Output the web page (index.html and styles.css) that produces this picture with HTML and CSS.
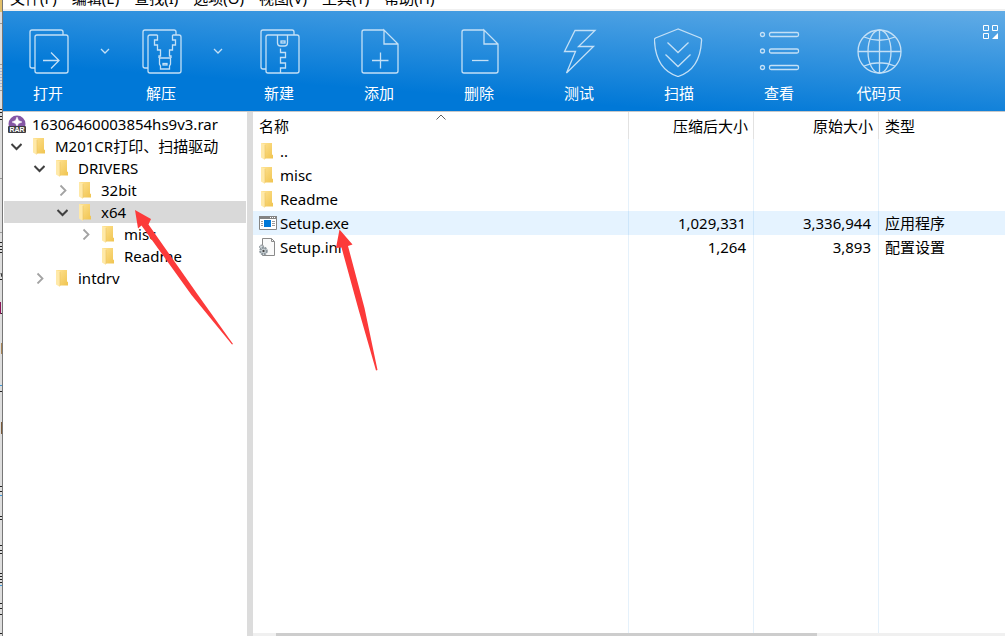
FILE: index.html
```html
<!DOCTYPE html>
<html lang="zh-CN">
<head>
<meta charset="utf-8">
<title>16306460003854hs9v3.rar</title>
<link rel="stylesheet" href="styles.css">
</head>
<body>
<svg width="0" height="0" class="defs" aria-hidden="true">
  <defs>
    <linearGradient id="gold" x1="0" y1="0" x2="1" y2="1"><stop offset="0" stop-color="#ffe394"/><stop offset="1" stop-color="#f0c450"/></linearGradient>
    <symbol id="folder" viewBox="0 0 14 18"><path d="M1 1h11v11.500l1 .5v3.500H4z" fill="url(#gold)"/><path d="M1 1l4 1.500v15.500l-4-2.500z" fill="#ffe9a8"/><path d="M5 3v14" stroke="#e9c261" stroke-width=".6"/></symbol>
    <symbol id="down" viewBox="0 0 12 12"><path d="M1.500 4L6.500 9l5-5" fill="none" stroke="#404040" stroke-width="2"/></symbol>
    <symbol id="right" viewBox="0 0 12 12"><path d="M4.500 1.500L9.500 6.500 4.500 11.500" fill="none" stroke="#a3a3a3" stroke-width="1.800"/></symbol>
  </defs>
</svg>
<div class="screen">
  <svg class="backdrop" aria-hidden="true">
    <rect width="3" height="12" fill="#e3c06a"/>
    <g stroke="#9a9a9a"><path d="M0 23.500h3M0 64.500h3M0 90.500h3M0 178.500h3M0 232.500h3"/></g>
    <g stroke="#a5b3d6"><path d="M0 68.500h3M0 71.500h3M0 74.500h3M0 77.500h3M0 80.500h3M0 83.500h3M0 86.500h3"/></g>
    <g stroke="#222"><path d="M0 109.500h3M0 112.500h3M0 116.500h3M0 119.500h3M0 242.500h3M0 246.500h3M0 249.500h3M0 252.500h3M1 273l1 4M0 279.500h3M0 313.500h3M0 391.500h2M0 486.500h3M0 491.500h3M0 516.500h3M0 519.500h3M0 545.500h3M0 550.500h3M0 553.500h3M0 573.500h3M0 576.500h3M0 579.500h3M0 582.500h3M0 603.500h3M0 608.500h3M0 614.500h3M0 633.500h3"/></g>
    <rect y="302" width="1" height="12" fill="#8b1457"/>
    <rect x="1" y="343" width="2" height="11" fill="#a88556"/>
    <rect x="1" y="422" width="2" height="12" fill="#7b5b3a"/>
    <path d="M0 495.500h2M0 585.500h2M0 385.500h2" stroke="#3f9ad8"/>
  </svg>
  <div class="window">
    <nav class="menubar">
      <a href="#">文件(F)</a><a href="#">编辑(E)</a><a href="#">查找(I)</a><a href="#">选项(O)</a><a href="#">视图(V)</a><a href="#">工具(T)</a><a href="#">帮助(H)</a>
    </nav>
    <header class="toolbar">
      <button class="tool split">
        <svg viewBox="-1 0 50 50"><path d="M11 41H8q-2 0-2-2V5q0-2 2-2h29q2 0 2 2v3"/><rect x="11" y="8" width="33" height="38" rx="2"/><path d="M19 33.500h16M27 25.500l8 8-8 8"/></svg>
        <span>打开</span></button>
      <button class="more" aria-label="打开菜单"><svg viewBox="0 0 10 6"><path d="M1 1l4 4 4-4"/></svg></button>
      <button class="tool split">
        <svg viewBox="-1 0 50 50"><path d="M11 41H8q-2 0-2-2V5q0-2 2-2h29q2 0 2 2v3"/><path d="M20.500 8H13q-2 0-2 2v34q0 2 2 2h29q2 0 2-2V10q0-2-2-2h-6.500"/><path d="M20.500 8v5h-3v5h3v5h3v6h-1.500v2M35.500 8v5h3v5h-3v5h-3v6H34v2"/><path d="M22.500 31h11v6l-1 2v3h-9v-3l-1-2z"/><rect x="26" y="36.500" width="4" height="1.500"/></svg>
        <span>解压</span></button>
      <button class="more" aria-label="解压菜单"><svg viewBox="0 0 10 6"><path d="M1 1l4 4 4-4"/></svg></button>
      <button class="tool">
        <svg viewBox="-1 0 50 50"><path d="M11 42H8q-2 0-2-2V5q0-2 2-2h29q2 0 2 2v3"/><rect x="11" y="8" width="33" height="38" rx="2"/><path d="M22.500 8v8q0 3 3 3h4q3 0 3-3V8"/><rect x="26" y="14" width="4" height="2"/><path d="M25.500 21.500v4h5v5h-5v5.500h5v5h-5v5M30.500 25.500v5M30.500 36v5"/></svg>
        <span>新建</span></button>
      <button class="tool">
        <svg viewBox="-1 0 50 50"><path d="M29 3H9q-2 0-2 2v39q0 2 2 2h32q2 0 2-2V17L29 3v14h14"/><path d="M17 33.500h16.500M25.500 25.500v16"/></svg>
        <span>添加</span></button>
      <button class="tool">
        <svg viewBox="-1 0 50 50"><path d="M29 3H9q-2 0-2 2v39q0 2 2 2h32q2 0 2-2V17L29 3v14h14"/><path d="M17 33.500h16.500"/></svg>
        <span>删除</span></button>
      <button class="tool">
        <svg viewBox="0 0 50 50"><path d="M21 3.500h20L24.500 19.500h15L12.500 46l9-21.500H10.500z"/></svg>
        <span>测试</span></button>
      <button class="tool">
        <svg viewBox="1 0 50 50"><path d="M25 2L2.500 11Q1 12 1.500 14c1 19 9 31 23.500 35.500C39.500 45 47.500 33 48.500 14q.5-2-1-3z"/><path d="M14.500 15.500L25 25.500l10.500-10M12.500 27.500l12.500 12 12.500-12"/></svg>
        <span>扫描</span></button>
      <button class="tool">
        <svg viewBox="-1 0 50 50"><circle cx="7.500" cy="7.500" r="2"/><circle cx="7.500" cy="24" r="2"/><circle cx="7.500" cy="40.500" r="2"/><rect x="14.500" y="5.500" width="29" height="4" rx="1.500"/><rect x="14.500" y="22" width="29" height="4" rx="1.500"/><rect x="14.500" y="38.500" width="29" height="4" rx="1.500"/></svg>
        <span>查看</span></button>
      <button class="tool">
        <svg viewBox="0 0 50 50"><circle cx="25.500" cy="24.500" r="21.500"/><ellipse cx="25.500" cy="24.500" rx="11.500" ry="21.500"/><path d="M25.500 3v43M4 24.500h43M10 10q15.500 6.500 31 0M10 39q15.500-6.500 31 0"/></svg>
        <span>代码页</span></button>
      <button class="layout" aria-label="工具栏布局"><svg viewBox="0 0 16 16"><path d="M1.500 1.500h5v5h-5zM10.500 1.500h5v5h-5zM1.500 9.500h5v5h-5z"/><path class="solid" d="M16 9v6h-6z"/></svg></button>
    </header>
    <main class="panes">
      <ul class="tree">
        <li class="node root"><svg class="rar" viewBox="0 0 18 18"><circle cx="9" cy="9" r="8.500" fill="#8557a5"/><path d="M9 2l1.500 3.500L14 7l-3.500 1.500L9 11 7.500 8.500 4 7l3.500-1.500z" fill="#fff" stroke="#fff" stroke-width=".5"/><rect y="11" width="18" height="7" rx="1" fill="#3c3c40"/><text x="9" y="17" text-anchor="middle">RAR</text></svg><span>16306460003854hs9v3.rar</span></li>
        <li class="node"><svg class="chev"><use href="#down"/></svg><svg class="folder"><use href="#folder"/></svg><span>M201CR打印、扫描驱动</span></li>
        <li class="node d1"><svg class="chev"><use href="#down"/></svg><svg class="folder"><use href="#folder"/></svg><span>DRIVERS</span></li>
        <li class="node d2"><svg class="chev"><use href="#right"/></svg><svg class="folder"><use href="#folder"/></svg><span>32bit</span></li>
        <li class="node d2 selected"><svg class="chev"><use href="#down"/></svg><svg class="folder"><use href="#folder"/></svg><span>x64</span></li>
        <li class="node d3"><svg class="chev"><use href="#right"/></svg><svg class="folder"><use href="#folder"/></svg><span>misc</span></li>
        <li class="node d3"><svg class="chev"></svg><svg class="folder"><use href="#folder"/></svg><span>Readme</span></li>
        <li class="node d1"><svg class="chev"><use href="#right"/></svg><svg class="folder"><use href="#folder"/></svg><span>intdrv</span></li>
      </ul>
      <section class="files">
        <table>
          <colgroup><col class="c-name"><col class="c-size"><col class="c-size"><col></colgroup>
          <thead><tr><th>名称<svg class="sort" viewBox="0 0 10 6"><path d="M.5 5.500L5 1l4.500 4.500" fill="none" stroke="#606060"/></svg></th><th class="num">压缩后大小</th><th class="num">原始大小</th><th>类型</th></tr></thead>
          <tbody>
            <tr><td><div class="file"><svg class="folder"><use href="#folder"/></svg>..</div></td><td></td><td></td><td></td></tr>
            <tr><td><div class="file"><svg class="folder"><use href="#folder"/></svg>misc</div></td><td></td><td></td><td></td></tr>
            <tr><td><div class="file"><svg class="folder"><use href="#folder"/></svg>Readme</div></td><td></td><td></td><td></td></tr>
            <tr class="hot"><td><div class="file"><svg class="type" viewBox="0 0 18 18"><path d="M.5 2.500h17v13H.5z" fill="#fff" stroke="#848484"/><path d="M0 2h18v3H0z" fill="#848484"/><path d="M11 3.500h1M13 3.500h1M15 3.500h1" stroke="#fff"/><path d="M5 6h7v7H5z" fill="#0078d7"/><path d="M2 7.500h2M2 9.500h2M2 11.500h2M13 7.500h3M13 9.500h3M13 11.500h3" stroke="#9a9a9a"/></svg>Setup.exe</div></td><td class="num">1,029,331</td><td class="num">3,336,944</td><td>应用程序</td></tr>
            <tr><td><div class="file"><svg class="type" viewBox="0 0 18 18"><path d="M3.500.5h9l3 3v14h-12z" fill="#fafafa" stroke="#8a8a8a"/><path d="M12.500.5v3h3" fill="none" stroke="#8a8a8a"/><circle cx="2.500" cy="9" r="1.800" fill="#dce3e7" stroke="#9aa1a6" stroke-width="1.500" stroke-dasharray="1.500 .7"/><circle cx="4.500" cy="13" r="3.200" fill="#dce3e7" stroke="#8b959b" stroke-width="2.200" stroke-dasharray="2 .6"/><circle cx="4.500" cy="13" r="1.200" fill="#444"/></svg>Setup.ini</div></td><td class="num">1,264</td><td class="num">3,893</td><td>配置设置</td></tr>
            <tr class="rest"><td></td><td></td><td></td><td></td></tr>
          </tbody>
        </table>
        <div class="scroll"><div class="thumb"></div></div>
      </section>
    </main>
  </div>
  <svg class="marks" aria-hidden="true"><path d="M135 210l16 9-2.500 5.500 49.500 70.500 35 49-1 .5-40.500-49.500-50-69.500-3.500 3z"/><path d="M339.500 229.500l13 15-4.500 1.500 16.500 62 13 62-1.500.5-17.500-61-17-62-5.500.5z"/></svg>
</div>
</body>
</html>
```
FILE: styles.css
```css
* { box-sizing: border-box; }
body {
  margin: 0;
  background: #fff;
  color: #000;
  font: 15px/22px "Noto Sans", "Noto Sans CJK SC", sans-serif;
}
button { margin: 0; padding: 0; border: 0; background: none; font: inherit; color: inherit; }
.defs { position: absolute; }
.screen { position: relative; display: flex; height: 100vh; overflow: hidden; }
.backdrop { flex: none; width: 3px; height: 100%; background: #dedede; border-right: 1px solid #777; }
.window { flex: 1; min-width: 0; display: flex; flex-direction: column; }

.menubar {
  flex: none;
  display: flex;
  align-items: flex-end;
  gap: 15px;
  height: 11px;
  padding-left: 7px;
  overflow: hidden;
  border-bottom: 2px solid #f0f0f0;
}
.menubar a { color: #000; text-decoration: none; white-space: nowrap; }

.toolbar {
  flex: none;
  display: flex;
  height: 101px;
  border-bottom: 1px solid #c8c8c8;
  background: linear-gradient(184deg, #62ace6, #0078d7 72%);
  color: #fff;
}
.toolbar svg { display: block; fill: none; stroke: #c4e0f6; stroke-width: 1.3; }
.tool { display: flex; flex-direction: column; align-items: center; gap: 5px; width: 100px; padding-top: 16px; }
.tool.split { width: 90px; }
.tool svg { width: 50px; height: 50px; }
.more { display: flex; justify-content: center; width: 23px; padding-top: 37px; }
.more svg { width: 10px; height: 6px; }
.layout { align-self: flex-start; margin: 13px 7px 0 auto; }
.toolbar .layout svg { width: 16px; height: 16px; stroke: #fff; stroke-width: 1; }
.toolbar .layout .solid { fill: #fff; stroke: none; }

.panes { flex: 1; display: flex; min-height: 0; }
.tree {
  flex: none;
  width: 250px;
  margin: 0;
  padding: 1px 1px 0;
  list-style: none;
  border-right: 6px solid #dcdcdc;
}
.node { display: flex; align-items: center; height: 22px; padding-left: 6px; white-space: nowrap; }
.node.d1 { padding-left: 29px; }
.node.d2 { padding-left: 52px; }
.node.d3 { padding-left: 75px; }
.node.root { padding-left: 4px; gap: 6px; }
.selected { background: #d9d9d9; }
.rar { width: 18px; height: 18px; }
.rar text { font: bold 7px "Liberation Sans", sans-serif; fill: #fff; }
.chev { width: 12px; height: 12px; margin-right: 10px; }
.folder { flex: none; width: 14px; height: 18px; margin-right: 9px; }

.files { flex: 1; min-width: 0; display: flex; flex-direction: column; }
table { flex: 1; width: 100%; table-layout: fixed; border-collapse: separate; border-spacing: 0; }
.c-name { width: 376px; }
.c-size { width: 125px; }
th, td { height: 24px; padding: 0 6px; text-align: left; font-weight: normal; border-right: 1px solid #e5f1fb; }
th { position: relative; height: 27px; border-color: #e2e2e2; }
th:last-child, td:last-child { border-right: 0; }
.num { text-align: right; }
td.num { padding-right: 7px; }
th.num { padding-right: 5px; }
.hot { background: #e5f3ff; }
.hot td { border-color: #cde6fb; }
.rest td { height: auto; }
.sort { position: absolute; left: 0; right: 0; top: 2px; width: 10px; height: 6px; margin: 0 auto; }
.file { display: flex; align-items: center; height: 24px; }
.file .folder { margin: 0 6px 0 1px; }
.type { flex: none; width: 18px; height: 18px; margin-right: 3px; }
.scroll { flex: none; height: 3px; padding: 0 25% 0 3%; background: #f0f0f0; }
.thumb { height: 3px; background: #cdcdcd; }

.marks { position: absolute; left: 0; top: 0; width: 100%; height: 100%; fill: #fc3a3a; pointer-events: none; }
```
